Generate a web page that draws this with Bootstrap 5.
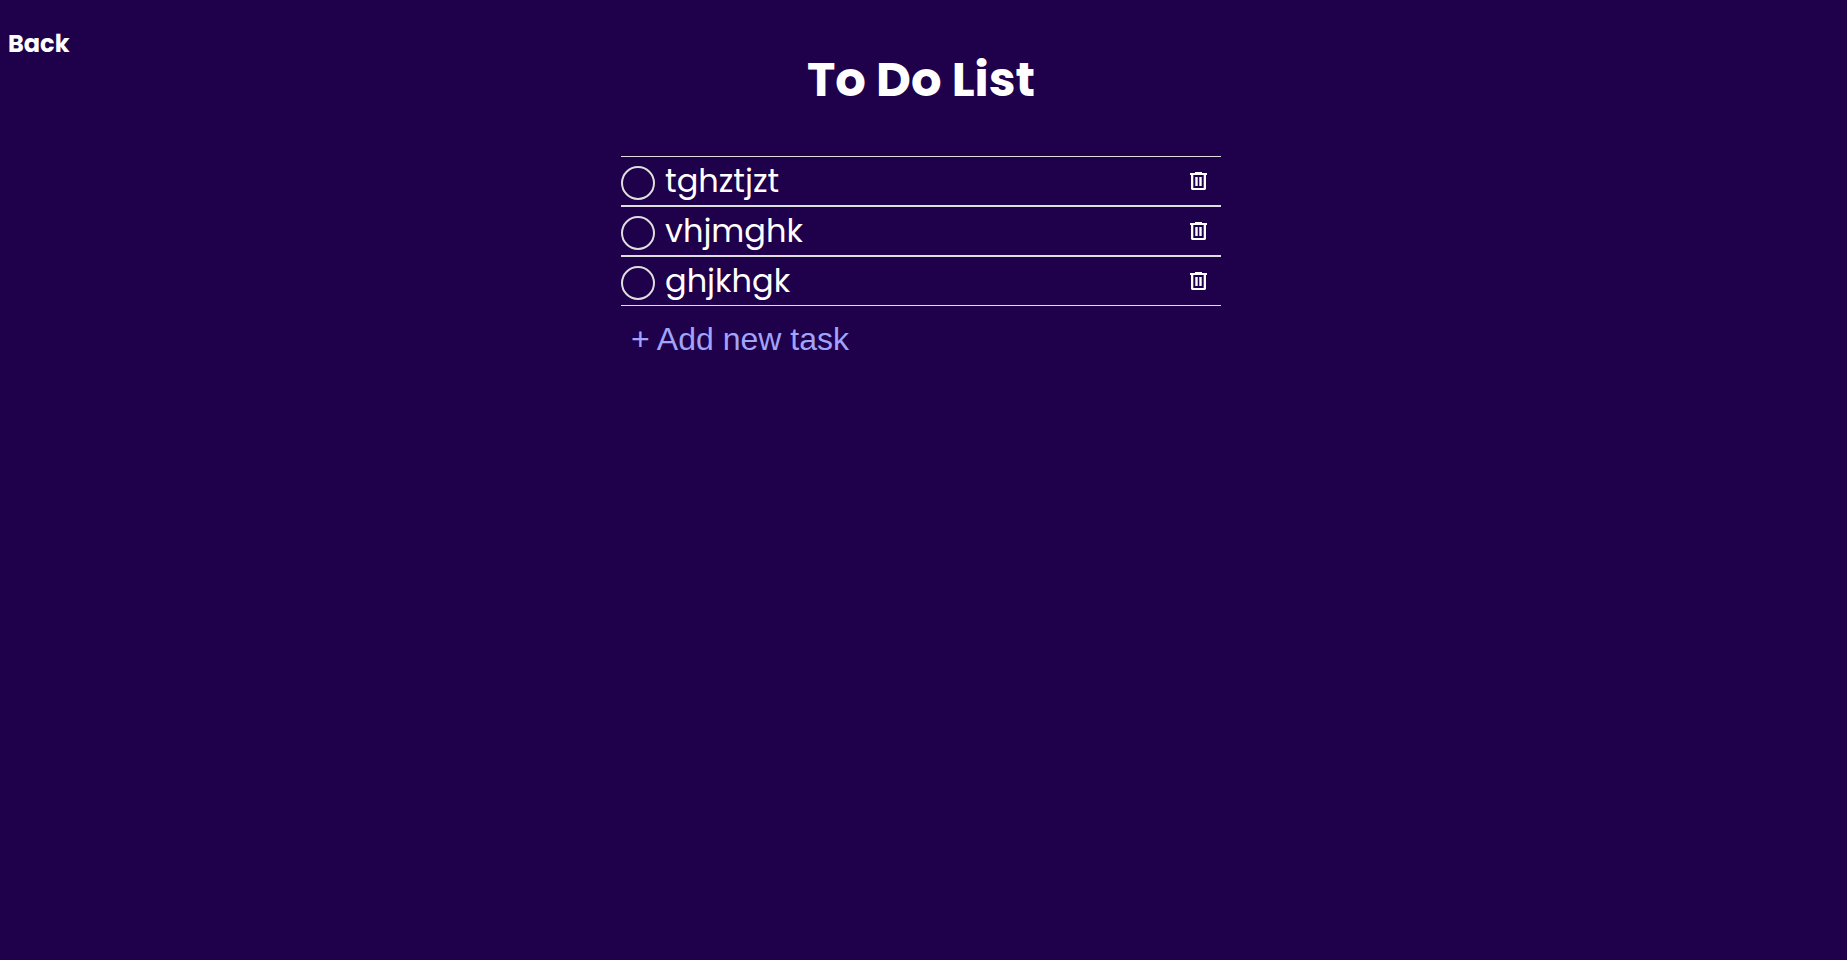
<!DOCTYPE html>
<html lang="en">
<head>
<meta charset="utf-8">
<meta name="viewport" content="width=device-width, initial-scale=1">
<title>To Do List</title>
<link href="https://cdn.jsdelivr.net/npm/bootstrap@5.3.0/dist/css/bootstrap.min.css" rel="stylesheet">
<style>
  body { background: #1f004a; color: #fff; font-family: Poppins, Inter, sans-serif; padding-right: 5px; }
  .back-nav { padding-top: 26px; }
  .back-link { font-size: 24px; line-height: 36px; font-weight: 700; }
  .todo { max-width: 600px; padding-top: 44px; }
  .todo-title { font-size: 48px; line-height: 72px; font-weight: 700; margin-bottom: 40px; }
  .task { height: 50px; border-top: 1px solid #dedede; border-bottom: 1px solid #dedede; }
  .task-check.form-check-input { width: 34px; height: 34px; border: 2px solid #dedede; border-radius: 50%; background-color: transparent; }
  .task-check.form-check-input:checked { background-color: #a0a4fb; }
  .task-name { font-size: 32px; line-height: 48px; margin-left: 10px; }
  .new-task.form-control { font: 32px/38px "Liberation Sans", Arial, sans-serif; color: #a0a4fb; padding-left: 10px; }
  .new-task.form-control::placeholder { color: #a0a4fb; opacity: 1; }
</style>
</head>
<body>
<div class="row g-0">
  <nav class="back-nav col"><a href="#" class="back-link ms-2 text-white text-decoration-none">Back</a></nav>
  <main class="todo col-12 col-md-8">
    <h1 class="todo-title text-center">To Do List</h1>
    <ul class="list-unstyled mb-0">
      <li class="task d-flex align-items-center">
        <input class="task-check form-check-input flex-shrink-0 mt-1" type="checkbox" id="t1">
        <label class="task-name flex-grow-1" for="t1">tghztjzt</label>
        <button class="btn p-0 me-2 border-0 lh-1 text-white" type="button" aria-label="Delete tghztjzt"><svg width="28" height="28" viewBox="0 0 28 28"><use href="#trash"/></svg></button>
      </li>
      <li class="task d-flex align-items-center">
        <input class="task-check form-check-input flex-shrink-0 mt-1" type="checkbox" id="t2">
        <label class="task-name flex-grow-1" for="t2">vhjmghk</label>
        <button class="btn p-0 me-2 border-0 lh-1 text-white" type="button" aria-label="Delete vhjmghk"><svg width="28" height="28" viewBox="0 0 28 28"><use href="#trash"/></svg></button>
      </li>
      <li class="task d-flex align-items-center">
        <input class="task-check form-check-input flex-shrink-0 mt-1" type="checkbox" id="t3">
        <label class="task-name flex-grow-1" for="t3">ghjkhgk</label>
        <button class="btn p-0 me-2 border-0 lh-1 text-white" type="button" aria-label="Delete ghjkhgk"><svg width="28" height="28" viewBox="0 0 28 28"><use href="#trash"/></svg></button>
      </li>
    </ul>
    <input class="new-task form-control bg-transparent border-0 mt-2" type="text" placeholder="+ Add new task" aria-label="New task">
  </main>
  <div class="col"></div>
</div>
<svg class="d-none"><symbol id="trash" viewBox="0 0 28 28"><path fill="currentColor" fill-rule="evenodd" d="M5 6h5V5h7v1h5v2h-1v14l-1 1H7l-1-1V8H5zM8.300 8v13h10.400V8zM10.300 10h2.400v9h-2.400zM14.300 10h2.400v9h-2.400z"/></symbol></svg>
<script src="https://cdn.jsdelivr.net/npm/bootstrap@5.3.0/dist/js/bootstrap.bundle.min.js"></script>
</body>
</html>
